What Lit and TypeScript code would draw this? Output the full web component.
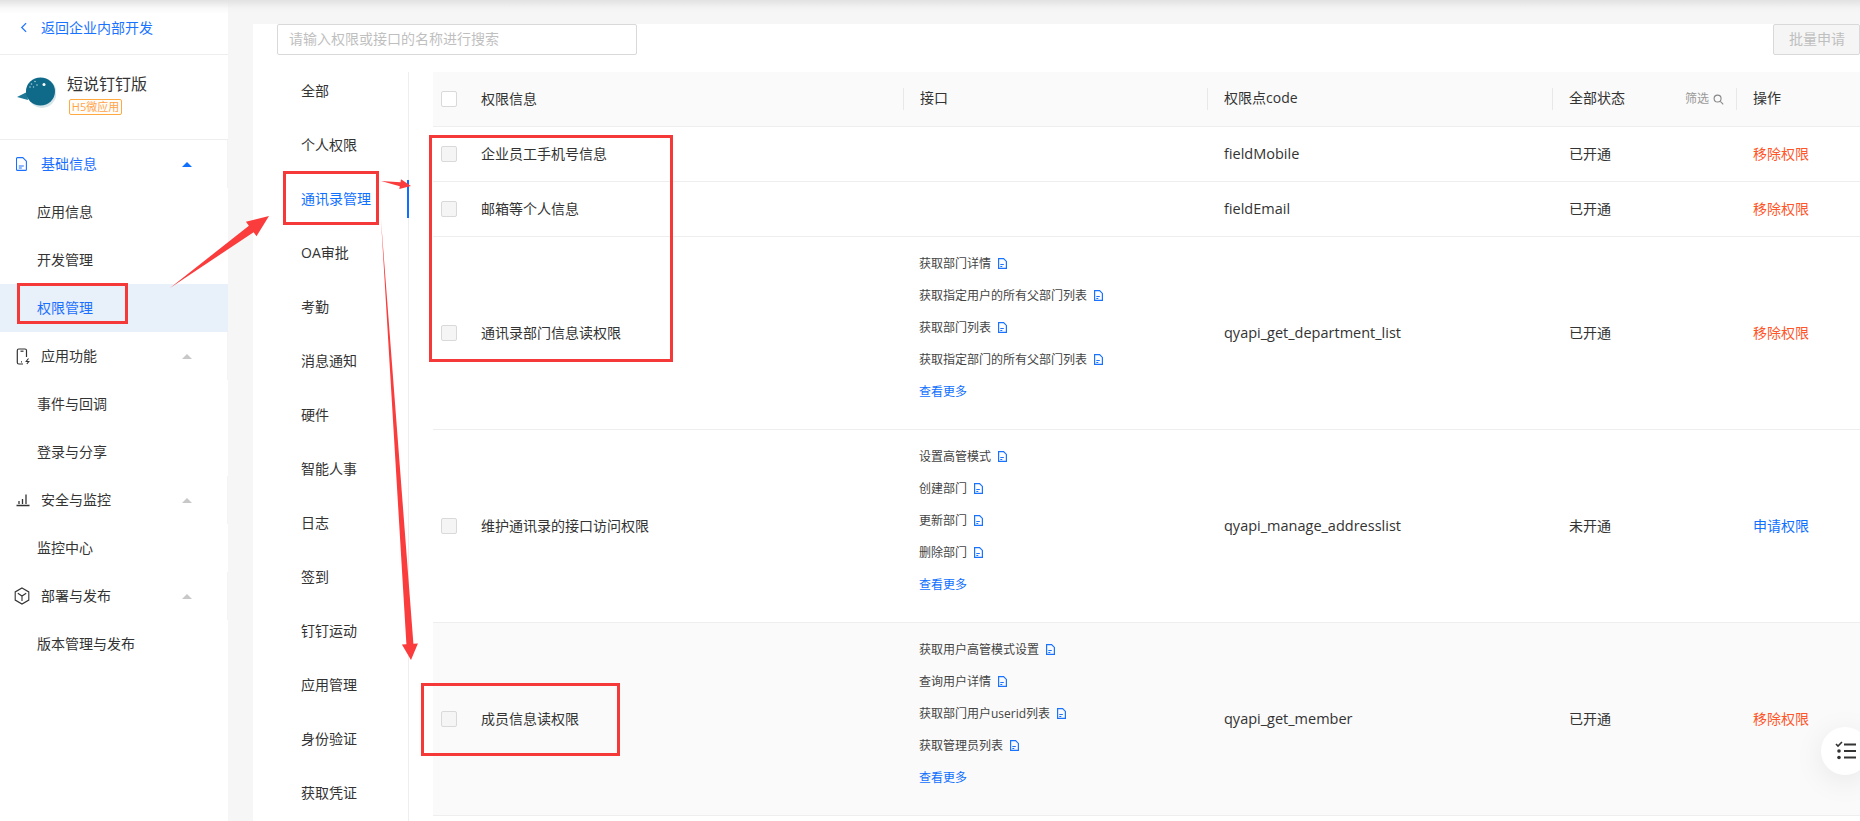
import { LitElement, html, css, svg } from 'lit';
import { customElement } from 'lit/decorators.js';

const docIcon = html`<svg class="doc" viewBox="0 0 9 11" width="9" height="11" fill="none" stroke="currentColor" stroke-width="1.200"><path d="M.6.6h5l2.800 2.800v7H.6z"/><path d="M2.300 6.500h3.500M2.300 8.500h2"/></svg>`;

const icons: Record<string, unknown> = {
  doc: html`<svg viewBox="0 0 11 14" width="11" height="14" fill="none" stroke="currentColor" stroke-width="1.100"><path d="M1.500.6h5.300l3.600 3.600v8.200a1 1 0 0 1-1 1H1.500a1 1 0 0 1-1-1V1.600a1 1 0 0 1 1-1z"/><path d="M2.800 9h5M2.800 11h3"/></svg>`,
  phone: html`<svg viewBox="0 0 15 17" width="15" height="17" fill="none" stroke="#333" stroke-width="1.200"><path d="M10.500 9V2.500a1.500 1.500 0 0 0-1.500-1.500H2.800a1.500 1.500 0 0 0-1.500 1.500v12a1.500 1.500 0 0 0 1.500 1.500H7"/><path d="M4.500 3.200h3"/><path d="M5 13.800h1"/><path d="M12.500 10.500l-2.300 3h2.600l-2 2.500" stroke-width="1.100"/></svg>`,
  chart: html`<svg viewBox="0 0 14 14" width="14" height="14" fill="none" stroke="#333" stroke-width="1.300"><path d="M0.500 12.500h13M3 11V8M6.500 11V6M10 11V1.500"/></svg>`,
  box: html`<svg viewBox="0 0 16 18" width="16" height="18" fill="none" stroke="#333" stroke-width="1.100"><path d="M8 1l6.800 3.900v8.200L8 17l-6.800-3.900V4.900z"/><path d="M3.800 6.200L8 9l4.200-2.800M8 9v5"/></svg>`,
};

type MenuItem = { label: string; sub?: boolean; icon?: string; on?: boolean };

const menu: MenuItem[] = [
  { label: '基础信息', icon: 'doc', on: true },
  { label: '应用信息', sub: true },
  { label: '开发管理', sub: true },
  { label: '权限管理', sub: true, on: true },
  { label: '应用功能', icon: 'phone' },
  { label: '事件与回调', sub: true },
  { label: '登录与分享', sub: true },
  { label: '安全与监控', icon: 'chart' },
  { label: '监控中心', sub: true },
  { label: '部署与发布', icon: 'box' },
  { label: '版本管理与发布', sub: true },
];

const categories = ['全部', '个人权限', '通讯录管理', 'OA审批', '考勤', '消息通知', '硬件', '智能人事', '日志', '签到', '钉钉运动', '应用管理', '身份验证', '获取凭证'];

type Row = { name: string; apis?: string[]; code: string; open: boolean; hover?: boolean };

const rows: Row[] = [
  { name: '企业员工手机号信息', code: 'fieldMobile', open: true },
  { name: '邮箱等个人信息', code: 'fieldEmail', open: true },
  { name: '通讯录部门信息读权限', apis: ['获取部门详情', '获取指定用户的所有父部门列表', '获取部门列表', '获取指定部门的所有父部门列表'], code: 'qyapi_get_department_list', open: true },
  { name: '维护通讯录的接口访问权限', apis: ['设置高管模式', '创建部门', '更新部门', '删除部门'], code: 'qyapi_manage_addresslist', open: false },
  { name: '成员信息读权限', apis: ['获取用户高管模式设置', '查询用户详情', '获取部门用户userid列表', '获取管理员列表'], code: 'qyapi_get_member', open: true, hover: true },
];

// tapered annotation arrow, thin at the tail
function arrow(x1: number, y1: number, x2: number, y2: number, shaft: number, head: number, len: number) {
  const d = Math.hypot(x2 - x1, y2 - y1);
  const ux = (x2 - x1) / d;
  const uy = (y2 - y1) / d;
  const bx = x2 - ux * len;
  const by = y2 - uy * len;
  const p = (x: number, y: number, n: number) => `${(x - uy * n).toFixed(1)},${(y + ux * n).toFixed(1)}`;
  const pts = [`${x1},${y1}`, p(bx, by, shaft), p(bx, by, head), `${x2},${y2}`, p(bx, by, -head), p(bx, by, -shaft)];
  return svg`<polygon points=${pts.join(' ')} fill="#fa3c3c"/>`;
}

@customElement('app-root')
export class AppRoot extends LitElement {
  static override styles = css`
    :host {
      display: block;
      position: relative;
      width: 1860px;
      height: 821px;
      overflow: hidden;
      background: #f6f6f6;
      font-family: "Open Sans", "Noto Sans CJK SC", sans-serif;
      font-size: 14px;
      color: #333;
    }
    .page { display: flex; height: 821px; }

    .side { width: 228px; flex: none; background: #fff; }
    .back { display: flex; align-items: center; height: 54px; padding-left: 20px; gap: 14px; color: #1a73ff; border-bottom: 1px solid #eee; box-sizing: content-box; }
    .app { display: flex; height: 84px; padding-left: 16px; border-bottom: 1px solid #eee; }
    .app svg { margin-top: 19px; flex: none; }
    .app-text { margin: 19px 0 0 11px; }
    .app-name { font-size: 16px; line-height: 20px; color: #333; }
    .tag { margin: 5px 0 0 2px; width: 53px; height: 16px; box-sizing: border-box; border: 1px solid #ffa940; border-radius: 2px; color: #ffa448; font-size: 11px; line-height: 13px; text-align: center; background: #fffdfa; }
    .item { display: flex; align-items: center; height: 48px; box-sizing: border-box; padding-bottom: 2px; }
    .head { padding-left: 16px; border-right: 1px solid #f4f4f4; }
    .head .ico { width: 25px; flex: none; display: flex; margin-top: 2px; }
    .head .ico.wide { margin-left: -2px; width: 27px; }
    .head .caret { margin: 2px 35px 0 auto; width: 0; height: 0; border: 5px solid transparent; border-top: 0; border-bottom: 5px solid #c8c8c8; }
    .head.on { color: #1a6fff; }
    .head.on .caret { border-bottom-color: #0f6fff; }
    .sub { padding-left: 37px; }
    .sub.on { background: #e8f0fa; color: #1a6fff; }

    .main { margin: 24px 0 0 25px; flex: 1; background: #fff; min-width: 0; }
    .bar { display: flex; justify-content: space-between; padding-left: 24px; height: 31px; }
    .search { width: 360px; box-sizing: border-box; border: 1px solid #d9d9d9; border-radius: 2px; padding-left: 11px; line-height: 28px; color: #bfbfbf; }
    .batch { width: 87px; box-sizing: border-box; border: 1px solid #d9d9d9; border-radius: 2px; background: #f5f5f5; padding-left: 15px; line-height: 28px; color: #bfbfbf; }
    .body { display: flex; margin-top: 17px; }

    .cats { width: 156px; box-sizing: border-box; flex: none; height: 760px; border-right: 1px solid #eee; }
    .cat { height: 38px; margin-bottom: 16px; line-height: 37px; padding-left: 48px; margin-right: -1px; }
    .cat.on { color: #0f6fff; border-right: 2px solid #0f6fff; }

    .table { margin-left: 24px; flex: 1; min-width: 0; }
    .row { display: grid; grid-template-columns: 470px 304px 345px 184px 124px; align-items: center; border-bottom: 1px solid #eee; box-sizing: border-box; }
    .row.hover { background: #fafafa; }
    .row.plain { height: 55px; }
    .row.tall { height: 193px; }
    .row.top { height: 55px; background: #fafafa; color: #333; }
    .namecell { display: flex; align-items: center; padding-left: 8px; gap: 24px; }
    .t { padding-bottom: 2px; }
    .check { width: 16px; height: 16px; box-sizing: border-box; border: 1px solid #d9d9d9; border-radius: 2px; background: #f5f5f5; flex: none; }
    .top .check { background: #fff; }
    .th { height: 22px; line-height: 20px; border-left: 1px solid #e8e8e8; padding-left: 16px; display: flex; }
    .filter { margin-left: auto; padding-right: 12px; font-size: 12px; color: #999; display: flex; align-items: center; gap: 4px; }
    .td { padding: 0 0 2px 17px; }
    .code { font-size: 14.500px; }
    .apis { font-size: 12px; align-self: start; padding: 10px 0 0 16px; }
    .api { height: 32px; display: flex; align-items: center; gap: 7px; color: #444; }
    .doc { color: #1a73ff; flex: none; margin-top: 1px; }
    .more { height: 32px; line-height: 33px; color: #0f6fff; }
    .remove { color: #ff5528; }
    .apply { color: #0f6fff; }

    .fab { position: absolute; left: 1821px; top: 727px; width: 48px; height: 48px; border-radius: 50%; background: #fff; box-shadow: 0 6px 30px rgba(0, 0, 0, 0.08); }
    .fab svg { position: absolute; left: 14px; top: 14px; }
    .top-shade { position: absolute; left: 0; top: 0; right: 0; height: 14px; background: linear-gradient(#e2e2e2, rgba(240, 240, 240, 0.4) 60%, rgba(246, 246, 246, 0)); pointer-events: none; }
    .marks { position: absolute; left: 0; top: 0; pointer-events: none; }
  `;

  private renderMenu(m: MenuItem) {
    if (m.sub) return html`<div class="item sub ${m.on ? 'on' : ''}">${m.label}</div>`;
    return html`<div class="item head ${m.on ? 'on' : ''}">
      <span class="ico ${m.icon === 'box' ? 'wide' : ''}">${icons[m.icon!]}</span>${m.label}<i class="caret"></i>
    </div>`;
  }

  private renderRow(r: Row) {
    return html`<div class="row ${r.apis ? 'tall' : 'plain'} ${r.hover ? 'hover' : ''}">
      <div class="namecell"><span class="check"></span><span class="t">${r.name}</span></div>
      ${r.apis
        ? html`<div class="apis">
            ${r.apis.map((a) => html`<div class="api">${a}${docIcon}</div>`)}
            <div class="more">查看更多</div>
          </div>`
        : html`<div></div>`}
      <div class="td code">${r.code}</div>
      <div class="td">${r.open ? '已开通' : '未开通'}</div>
      <div class="td ${r.open ? 'remove' : 'apply'}">${r.open ? '移除权限' : '申请权限'}</div>
    </div>`;
  }

  override render() {
    return html`
      <div class="page">
        <aside class="side">
          <div class="back">
            <svg viewBox="0 0 8 12" width="7" height="11" fill="none" stroke="#1a73ff" stroke-width="1.400"><path d="M7 1L2 6l5 5"/></svg>
            返回企业内部开发
          </div>
          <div class="app">
            <svg viewBox="0 0 40 36" width="40" height="36">
              <path d="M1 23l10-5 1 8z" fill="#1c7896"/>
              <ellipse cx="26" cy="19" rx="14.500" ry="15" fill="#d5e5ea"/>
              <ellipse cx="24.500" cy="17.500" rx="14.500" ry="14" fill="#0f6a8a"/>
              <circle cx="28" cy="10.500" r="1.500" fill="#fff"/>
              <circle cx="15.500" cy="10" r="0.800" fill="#a4ccd9"/><circle cx="19" cy="7.500" r="0.800" fill="#a4ccd9"/>
              <circle cx="14" cy="13" r="0.800" fill="#a4ccd9"/><circle cx="21" cy="11" r="0.800" fill="#a4ccd9"/>
              <circle cx="17.500" cy="13" r="0.700" fill="#a4ccd9"/>
            </svg>
            <div class="app-text">
              <div class="app-name">短说钉钉版</div>
              <div class="tag">H5微应用</div>
            </div>
          </div>
          ${menu.map((m) => this.renderMenu(m))}
        </aside>
        <main class="main">
          <div class="bar">
            <div class="search">请输入权限或接口的名称进行搜索</div>
            <div class="batch">批量申请</div>
          </div>
          <div class="body">
            <nav class="cats">
              ${categories.map((c) => html`<div class="cat ${c === '通讯录管理' ? 'on' : ''}">${c}</div>`)}
            </nav>
            <section class="table">
              <div class="row top">
                <div class="namecell"><span class="check"></span><span class="t">权限信息</span></div>
                <div class="th">接口</div>
                <div class="th">权限点code</div>
                <div class="th">全部状态
                  <span class="filter">筛选
                    <svg viewBox="0 0 12 12" width="11" height="11" fill="none" stroke="#888" stroke-width="1.200"><circle cx="5" cy="5" r="3.800"/><path d="M8 8l3.200 3.200"/></svg>
                  </span>
                </div>
                <div class="th">操作</div>
              </div>
              ${rows.map((r) => this.renderRow(r))}
            </section>
          </div>
        </main>
      </div>
      <div class="top-shade"></div>
      <div class="fab">
        <svg viewBox="0 0 22 20" width="22" height="20" fill="none" stroke="#333" stroke-width="2">
          <path d="M1 3l2 2 4-4" stroke-width="1.600"/><path d="M9 3.500h12M9 10h12M9 16.500h12"/>
          <circle cx="4" cy="10" r="1.800" fill="#333" stroke="none"/><circle cx="4" cy="16.500" r="1.800" fill="#333" stroke="none"/>
        </svg>
      </div>
      <svg class="marks" width="1860" height="821" fill="none" stroke="#f53838" stroke-width="3">
        <rect x="18.500" y="284.500" width="108" height="38"/>
        <rect x="284.500" y="172.500" width="93" height="51"/>
        <rect x="430.500" y="136.500" width="241" height="224"/>
        <rect x="422.500" y="684.500" width="196" height="70"/>
        <g stroke="none">
          ${arrow(170, 288, 269, 216, 4, 9, 22)}
          ${arrow(381, 181, 411, 186, 2, 5, 11)}
          ${arrow(381, 220, 411, 660, 3.500, 8, 16)}
        </g>
      </svg>
    `;
  }
}
